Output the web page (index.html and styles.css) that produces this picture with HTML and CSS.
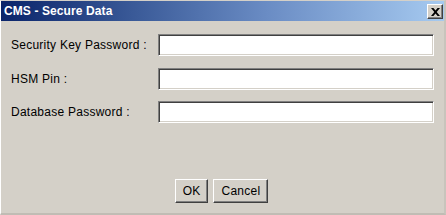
FILE: index.html
```html
<!DOCTYPE html>
<html>
<head>
<meta charset="utf-8">
<link rel="stylesheet" href="styles.css">
</head>
<body>
<div class="window">
  <div class="titlebar">
    <span class="title">CMS - Secure Data</span>
    <button class="close" aria-label="Close">
      <svg width="9" height="8" viewBox="0 0 9 8"><path d="M0 0h2.4l2.1 2.6L6.6 0H9L5.7 4 9 8H6.6L4.5 5.4 2.4 8H0l3.3-4z" fill="#000"/></svg>
    </button>
  </div>
  <div class="content">
    <div class="form">
      <div class="row"><label class="label">Security Key Password :</label><input class="field" type="text"></div>
      <div class="row"><label class="label">HSM Pin :</label><input class="field" type="text"></div>
      <div class="row"><label class="label">Database Password :</label><input class="field" type="text"></div>
    </div>
    <div class="buttons">
      <button class="btn">OK</button>
      <button class="btn">Cancel</button>
    </div>
  </div>
</div>
</body>
</html>
```

FILE: styles.css
```css
html, body {
  margin: 0;
  padding: 0;
  background: #d4d0c8;
}
.window {
  width: 446px;
  height: 215px;
  box-sizing: border-box;
  background: #d4d0c8;
  border-top: 1px solid #d4d0c8;
  border-left: 1px solid #ffffff;
  border-right: 2px solid #c8c4bc;
  border-bottom: 2px solid #c0bcb4;
  display: flex;
  flex-direction: column;
  font-family: "Liberation Sans", Arial, sans-serif;
}
.titlebar {
  height: 20px;
  background: linear-gradient(to right, #0a246a 0%, #3a5a98 30%, #6a8cc4 60%, #a6caf0 100%);
  display: flex;
  align-items: center;
  justify-content: space-between;
  padding: 0 1px 0 3px;
}
.title {
  color: #fff;
  font-weight: bold;
  font-size: 12px;
  letter-spacing: 0.1px;
}
.close {
  width: 16px;
  height: 15px;
  padding: 0;
  margin: 1px 0 0 0;
  background: #d4d0c8;
  border: 1px solid;
  border-color: #ffffff #404040 #404040 #ffffff;
  box-shadow: inset -1px -1px 0 #808080;
  display: flex;
  align-items: center;
  justify-content: center;
}
.content {
  flex: 1;
  display: flex;
  flex-direction: column;
  padding: 13px 10px 0 10px;
}
.form {
  display: flex;
  flex-direction: column;
  gap: 11.5px;
}
.row {
  display: flex;
  align-items: center;
}
.label {
  width: 147px;
  font-size: 12px;
  letter-spacing: 0.25px;
  color: #000;
}
.field {
  width: 277px;
  height: 22px;
  box-sizing: border-box;
  margin: 0;
  padding: 0;
  background: #fff;
  border: 1px solid;
  border-color: #808080 #ffffff #ffffff #808080;
  box-shadow: inset 1px 1px 0 #404040, inset -1px -1px 0 #d4d0c8;
  outline: none;
}
.buttons {
  display: flex;
  justify-content: center;
  gap: 5px;
  margin-top: 56px;
  padding-right: 2px;
}
.btn {
  height: 24px;
  box-sizing: border-box;
  margin: 0;
  padding: 0 7px;
  font-family: "Liberation Sans", Arial, sans-serif;
  font-size: 12px;
  letter-spacing: 0.25px;
  color: #000;
  background: #d4d0c8;
  border: 1px solid;
  border-color: #ffffff #404040 #404040 #ffffff;
  box-shadow: inset -1px -1px 0 #808080;
}
```
